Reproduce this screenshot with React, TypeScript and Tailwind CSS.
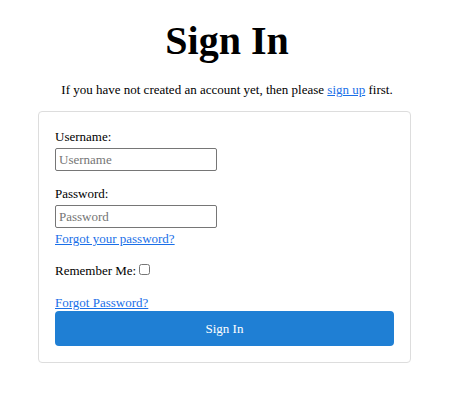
export default function App() {
  return (
    <div className="min-h-[413px] bg-white text-black font-['Liberation_Serif',serif] text-[13px]">
      <div className="flex flex-col items-center pt-[18px]">
        <h1 className="text-[40px] font-bold leading-[46px]">Sign In</h1>
        <p className="mt-[18px] leading-[15px]">
          If you have not created an account yet, then please{" "}
          <a href="#" className="text-[#1a6fe8] underline">sign up</a> first.
        </p>
      </div>
      <div className="ml-[38px] w-[373px] mt-[14px] border border-[#ddd] rounded-[4px] px-[16px] pt-[17px] pb-[16px]">
        <form className="flex flex-col" onSubmit={(e) => e.preventDefault()}>
          <label className="leading-[15px]">Username:</label>
          <input
            type="text"
            placeholder="Username"
            className="mt-[4px] w-[162px] h-[23px] border border-[#767676] rounded-[2px] px-[3px] text-[13px] placeholder:text-[#757575] outline-none"
          />
          <label className="mt-[15px] leading-[15px]">Password:</label>
          <input
            type="password"
            placeholder="Password"
            className="mt-[4px] w-[162px] h-[23px] border border-[#767676] rounded-[2px] px-[3px] text-[13px] placeholder:text-[#757575] outline-none"
          />
          <a href="#" className="mt-[3px] text-[#1a6fe8] underline leading-[15px] self-start">Forgot your password?</a>
          <div className="mt-[17px] flex items-center leading-[15px]">
            <span>Remember Me:</span>
            <input type="checkbox" className="ml-[3px] w-[11px] h-[11px] mb-[3px]" />
          </div>
          <a href="#" className="mt-[17px] text-[#1a6fe8] underline leading-[15px] self-start">Forgot Password?</a>
          <button
            type="submit"
            className="mt-[1px] h-[35px] w-full bg-[#1f7fd4] text-white rounded-[4px] text-[13px]"
          >
            Sign In
          </button>
        </form>
      </div>
    </div>
  );
}
